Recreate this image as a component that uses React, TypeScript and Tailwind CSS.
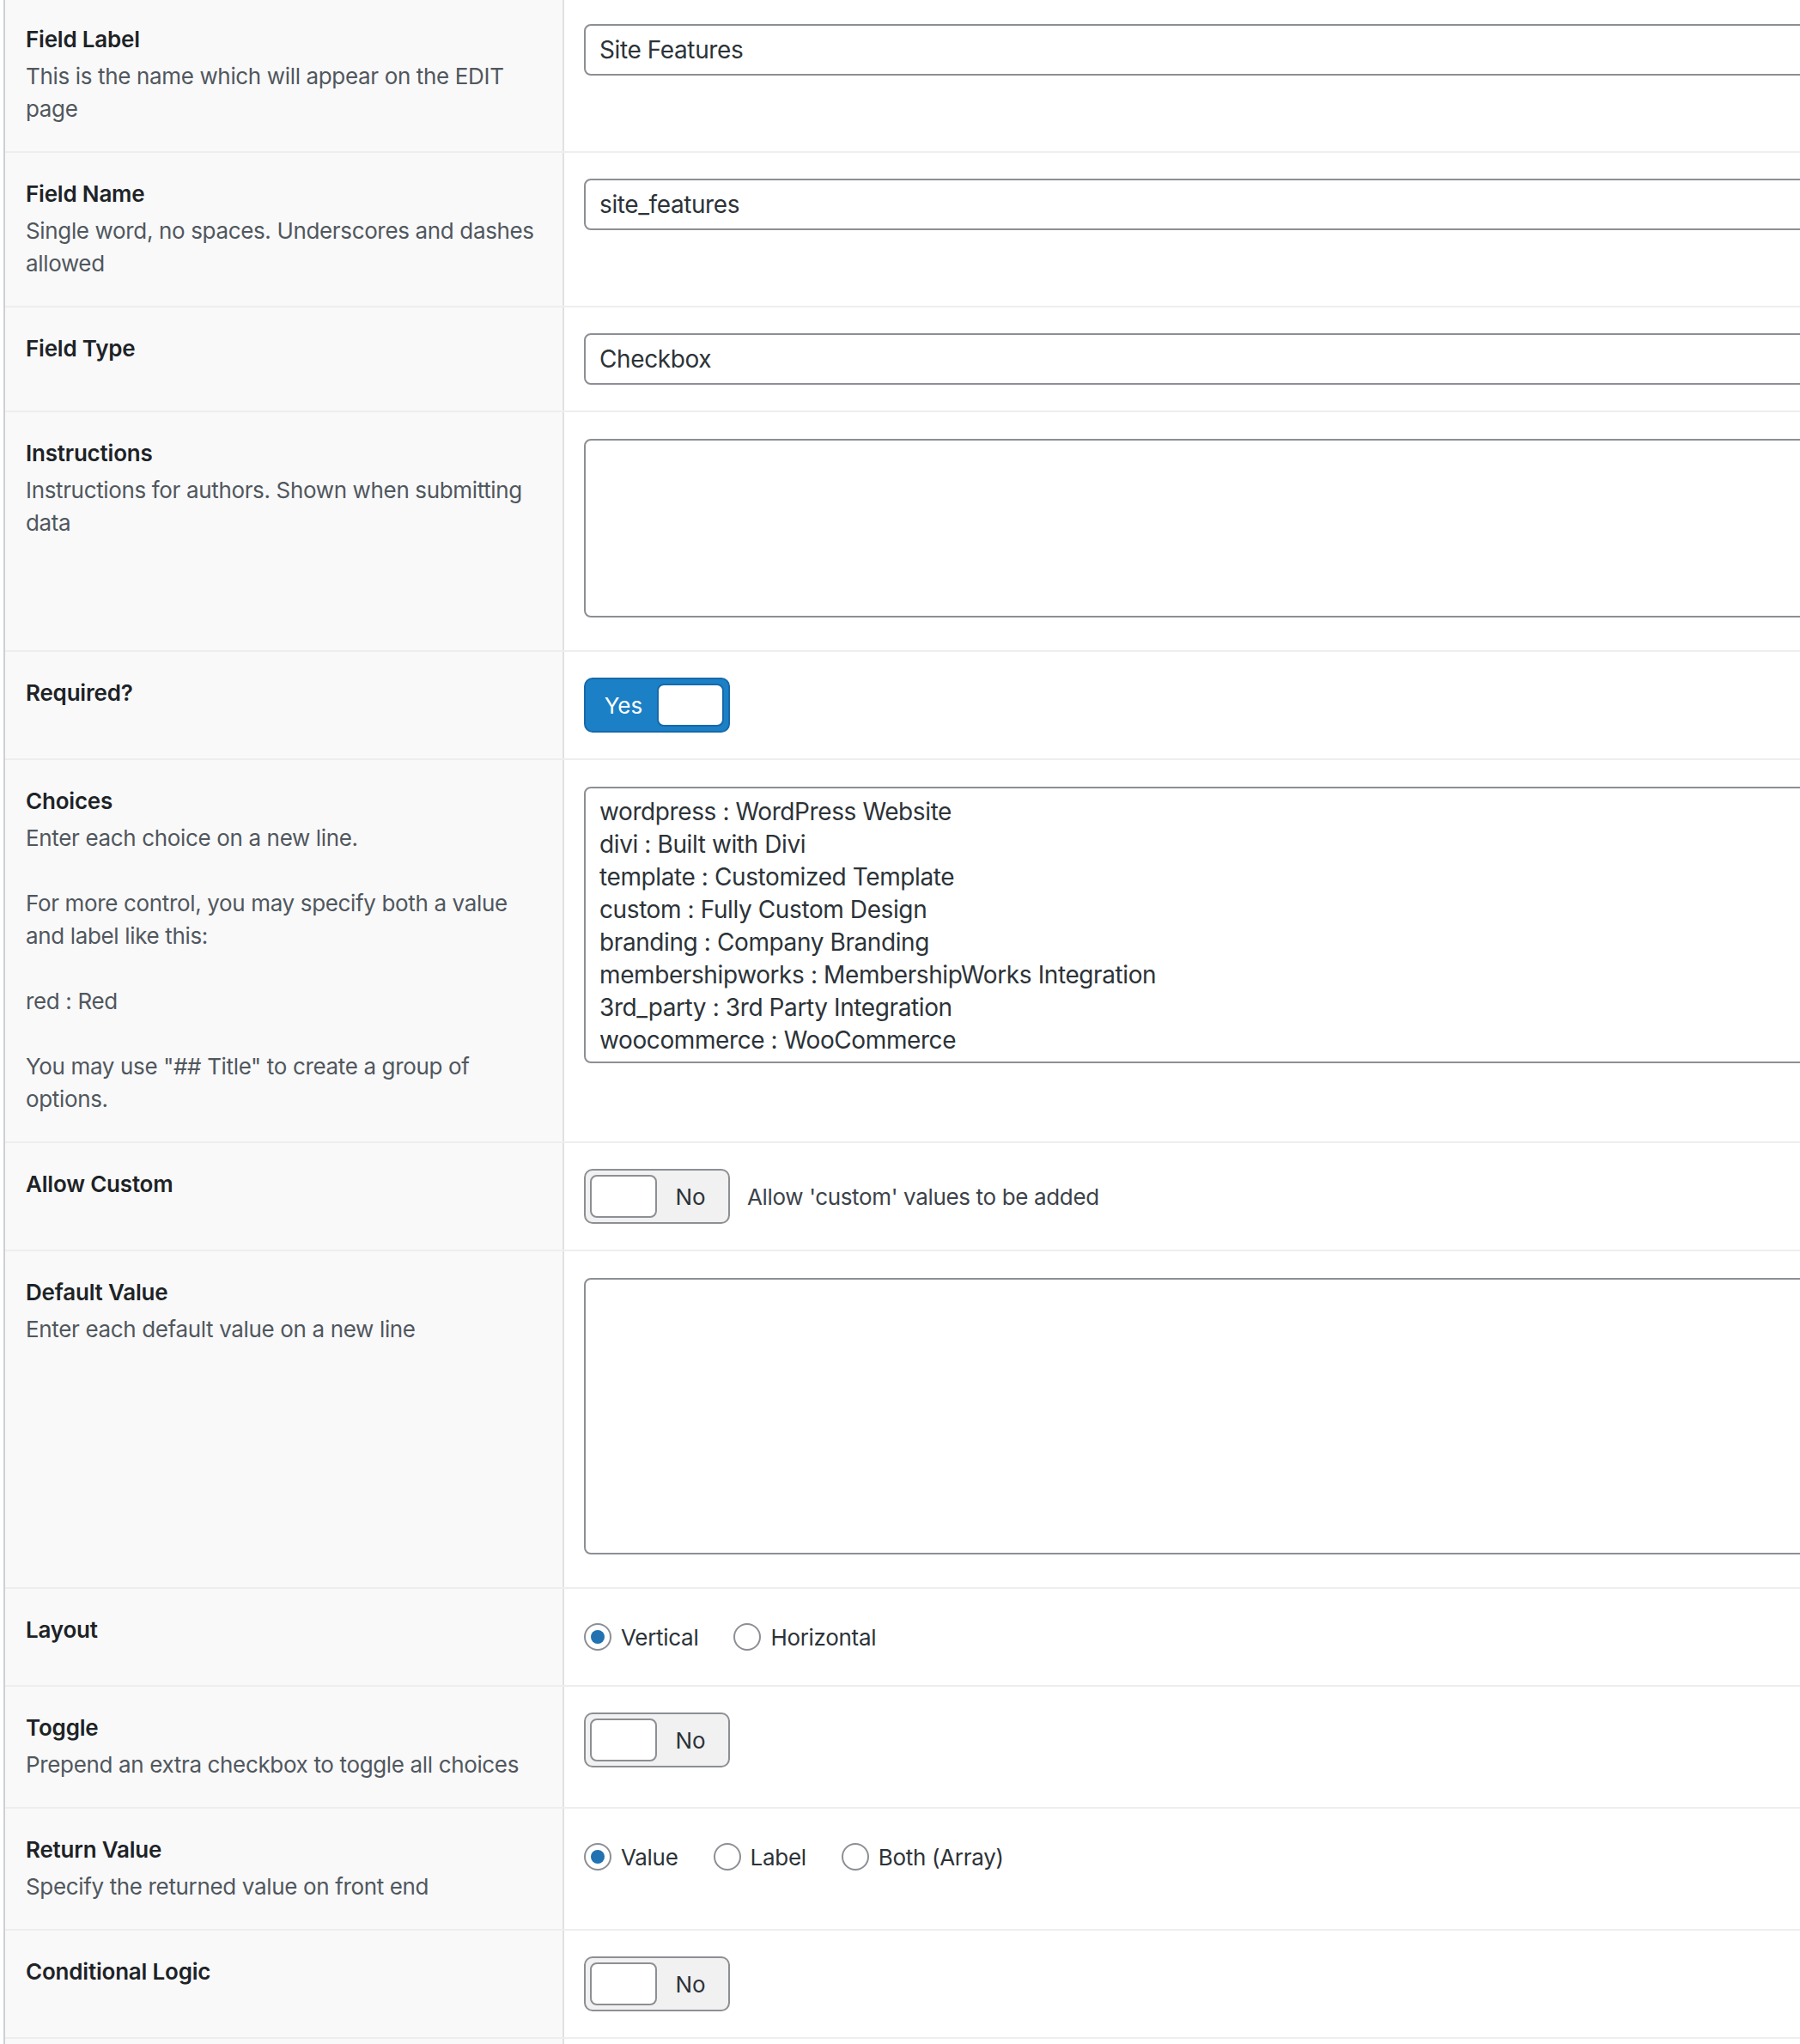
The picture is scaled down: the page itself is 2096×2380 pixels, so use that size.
import type { ReactNode } from 'react'

type Row = {
  label: string
  desc?: string[]
  control: ReactNode
}

const font = "font-['Inter','Liberation_Sans',sans-serif]"

function TextInput({ value }: { value: string }) {
  return (
    <input
      readOnly
      value={value}
      className="block h-[60px] w-full rounded-[8px] border-2 border-[#8c8f94] bg-white px-[16px] text-[28px] tracking-[-0.4px] text-[#2c3338] outline-none"
    />
  )
}

function TextArea({ lines }: { lines: string[] }) {
  return (
    <textarea
      readOnly
      value={lines.join('\n')}
      className="mt-[1px] mb-[8px] block h-[322px] w-full resize-none overflow-hidden rounded-[8px] border-2 border-[#8c8f94] bg-white px-[16px] py-[8px] text-[28px] leading-[38px] tracking-[-0.4px] text-[#2c3338] outline-none"
    />
  )
}

function Switch({ on }: { on?: boolean }) {
  if (on) {
    return (
      <div className="flex h-[64px] w-[170px] items-center rounded-[10px] border-2 border-[#1769aa] bg-[#1c80c6] p-[5px]">
        <span className="flex-1 text-center text-[26px] text-white">Yes</span>
        <span className="h-[50px] w-[78px] rounded-[8px] border-2 border-[#1769aa] bg-white" />
      </div>
    )
  }
  return (
    <div className="flex h-[64px] w-[170px] items-center rounded-[10px] border-2 border-[#8c8f94] bg-[#f1f1f1] p-[5px]">
      <span className="h-[50px] w-[78px] rounded-[8px] border-2 border-[#8c8f94] bg-white" />
      <span className="flex-1 text-center text-[26px] text-[#2c3338]">No</span>
    </div>
  )
}

function Radios({ items, checked }: { items: string[]; checked: number }) {
  return (
    <div className="flex h-[52px] items-center gap-[41px]">
      {items.map((item, i) => (
        <label key={item} className="flex items-center gap-[11px] text-[26px] tracking-[-0.3px] text-[#2c3338]">
          <span className="grid size-[32px] place-items-center rounded-full border-2 border-[#8c8f94] bg-white">
            {i === checked && <span className="size-[16px] rounded-full bg-[#2271b1]" />}
          </span>
          {item}
        </label>
      ))}
    </div>
  )
}

const choices = [
  'wordpress : WordPress Website',
  'divi : Built with Divi',
  'template : Customized Template',
  'custom : Fully Custom Design',
  'branding : Company Branding',
  'membershipworks : MembershipWorks Integration',
  '3rd_party : 3rd Party Integration',
  'woocommerce : WooCommerce',
]

const rows: Row[] = [
  {
    label: 'Field Label',
    desc: ['This is the name which will appear on the EDIT page'],
    control: <TextInput value="Site Features" />,
  },
  {
    label: 'Field Name',
    desc: ['Single word, no spaces. Underscores and dashes allowed'],
    control: <TextInput value="site_features" />,
  },
  { label: 'Field Type', control: <TextInput value="Checkbox" /> },
  {
    label: 'Instructions',
    desc: ['Instructions for authors. Shown when submitting data'],
    control: (
      <textarea
        readOnly
        className="mt-[1px] mb-[8px] block h-[208px] w-full resize-none rounded-[8px] border-2 border-[#8c8f94] bg-white outline-none"
      />
    ),
  },
  { label: 'Required?', control: <Switch on /> },
  {
    label: 'Choices',
    desc: [
      'Enter each choice on a new line.',
      '',
      'For more control, you may specify both a value and label like this:',
      '',
      'red : Red',
      '',
      'You may use "## Title" to create a group of options.',
    ],
    control: <TextArea lines={choices} />,
  },
  {
    label: 'Allow Custom',
    control: (
      <div className="flex items-center gap-[20px]">
        <Switch />
        <span className="text-[26px] tracking-[-0.35px] text-[#3c434a]">Allow 'custom' values to be added</span>
      </div>
    ),
  },
  {
    label: 'Default Value',
    desc: ['Enter each default value on a new line'],
    control: <TextArea lines={[]} />,
  },
  { label: 'Layout', control: <Radios items={['Vertical', 'Horizontal']} checked={0} /> },
  {
    label: 'Toggle',
    desc: ['Prepend an extra checkbox to toggle all choices'],
    control: <Switch />,
  },
  {
    label: 'Return Value',
    desc: ['Specify the returned value on front end'],
    control: <Radios items={['Value', 'Label', 'Both (Array)']} checked={0} />,
  },
  { label: 'Conditional Logic', control: <Switch /> },
]

export default function App() {
  return (
    <div className={`h-[2380px] w-[2096px] overflow-hidden bg-white ${font}`}>
      <div className="-mt-[4px] ml-[4px] w-[2400px] border-l-2 border-[#ccd0d4]">
        {rows.map((row) => (
          <div key={row.label} className="flex border-t-2 border-[#eeeeee]">
            <div className="w-[651px] shrink-0 border-r-2 border-[#e1e1e1] bg-[#f9f9f9] px-[24px] py-[30px]">
              <div className="text-[26px] leading-[36px] font-semibold tracking-[-0.2px] text-[#1d2327]">{row.label}</div>
              {row.desc && (
                <div className="mt-[6px] text-[26px] leading-[38px] tracking-[-0.35px] text-[#50575e]">
                  {row.desc.map((line, i) => (
                    <p key={i} className="min-h-[38px]">
                      {line}
                    </p>
                  ))}
                </div>
              )}
            </div>
            <div className="flex-1 py-[30px] pl-[23px] pr-[24px]">{row.control}</div>
          </div>
        ))}
        <div className="flex h-[40px] border-t-2 border-[#eeeeee]">
          <div className="w-[651px] shrink-0 border-r-2 border-[#e1e1e1] bg-[#f9f9f9]" />
          <div className="flex-1" />
        </div>
      </div>
    </div>
  )
}
